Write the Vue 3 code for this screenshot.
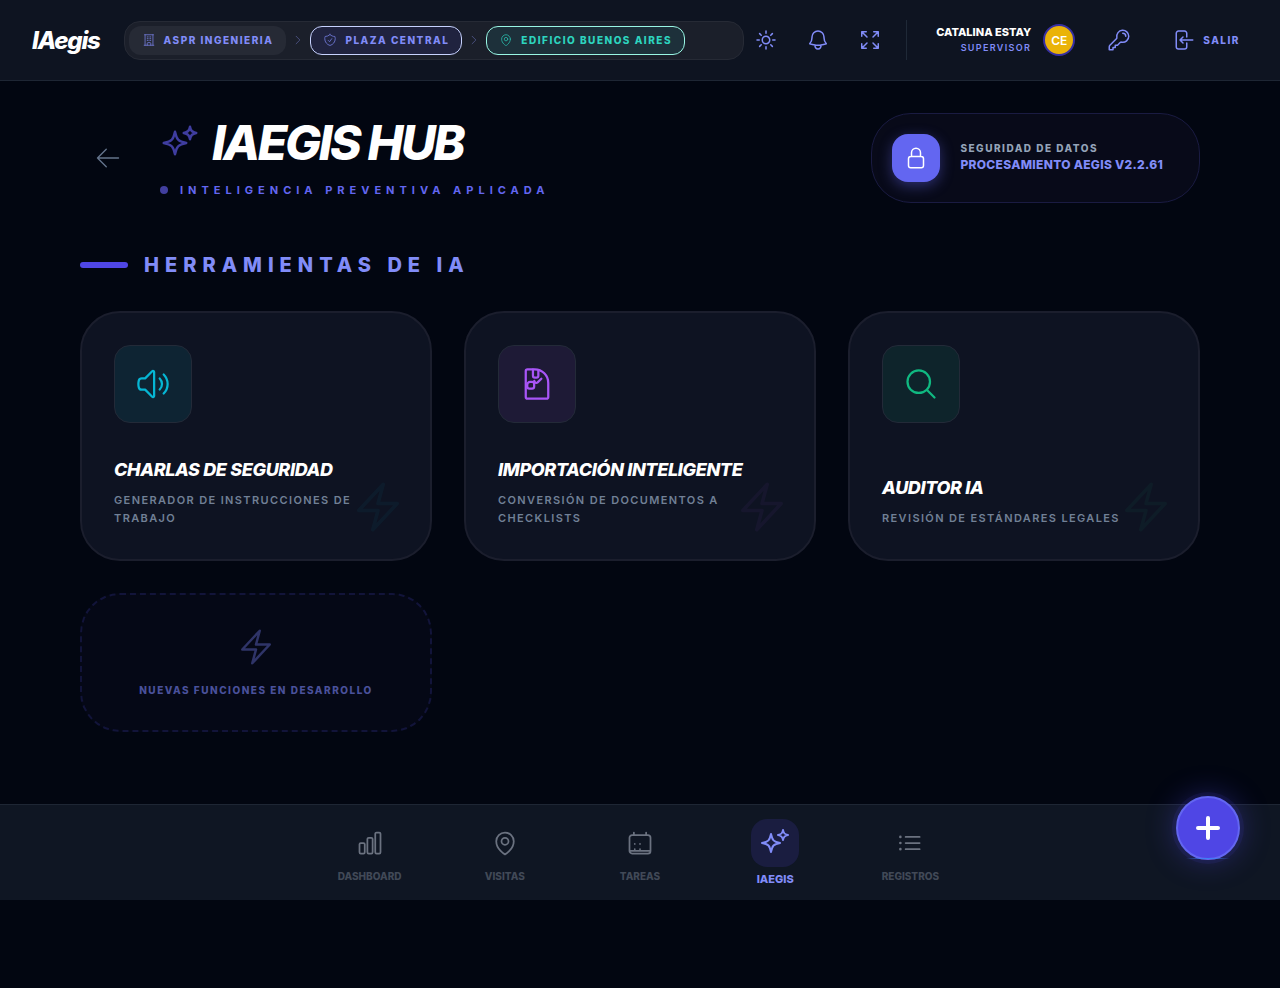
<script setup>
import { ref, h } from 'vue'

// Trazos de los iconos (viewBox 24x24)
const icons = {
  building: ['M3.75 21h16.5M4.5 3h15M5.25 3v18m13.5-18v18M9 6.75h1.5m-1.5 3h1.5m-1.5 3h1.5m3-6H15m-1.5 3H15m-1.5 3H15M9 21v-3.375c0-.621.504-1.125 1.125-1.125h3.75c.621 0 1.125.504 1.125 1.125V21'],
  shield: ['M9 12.75 11.25 15 15 9.75m-3-7.036A11.959 11.959 0 0 1 3.598 6 11.99 11.99 0 0 0 3 9.749c0 5.592 3.824 10.29 9 11.623 5.176-1.332 9-6.03 9-11.622 0-1.31-.21-2.571-.598-3.751h-.152c-3.196 0-6.1-1.248-8.25-3.285Z'],
  pin: ['M15 10.5a3 3 0 1 1-6 0 3 3 0 0 1 6 0Z', 'M19.5 10.5c0 7.142-7.5 11.25-7.5 11.25S4.5 17.642 4.5 10.5a7.5 7.5 0 1 1 15 0Z'],
  chevron: ['m8.25 4.5 7.5 7.5-7.5 7.5'],
  sun: ['M12 3v2.25m6.364.386-1.591 1.591M21 12h-2.25m-.386 6.364-1.591-1.591M12 18.75V21m-4.773-4.227-1.591 1.591M5.25 12H3m4.227-4.773L5.636 5.636M15.75 12a3.75 3.75 0 1 1-7.5 0 3.75 3.75 0 0 1 7.5 0Z'],
  bell: ['M14.857 17.082a23.848 23.848 0 0 0 5.454-1.31A8.967 8.967 0 0 1 18 9.75V9A6 6 0 0 0 6 9v.75a8.967 8.967 0 0 1-2.312 6.022c1.733.64 3.56 1.085 5.455 1.31m5.714 0a24.255 24.255 0 0 1-5.714 0m5.714 0a3 3 0 1 1-5.714 0'],
  expand: ['M3.75 3.75v4.5m0-4.5h4.5m-4.5 0L9 9M3.75 20.25v-4.5m0 4.5h4.5m-4.5 0L9 15M20.25 3.75h-4.5m4.5 0v4.5m0-4.5L15 9m5.25 11.25h-4.5m4.5 0v-4.5m0 4.5L15 15'],
  key: ['M15.75 5.25a3 3 0 0 1 3 3m3 0a6 6 0 0 1-7.029 5.912c-.563-.097-1.159.026-1.563.43L10.5 17.25H8.25v2.25H6v2.25H2.25v-2.818c0-.597.237-1.17.659-1.591l6.499-6.499c.404-.404.527-1 .43-1.563A6 6 0 1 1 21.75 8.25Z'],
  logout: ['M15.75 9V5.25A2.25 2.25 0 0 0 13.5 3h-6a2.25 2.25 0 0 0-2.25 2.25v13.5A2.25 2.25 0 0 0 7.5 21h6a2.25 2.25 0 0 0 2.25-2.25V15M12 9l-3 3m0 0 3 3m-3-3h12.75'],
  arrowLeft: ['M10.5 19.5 3 12m0 0 7.5-7.5M3 12h18'],
  sparkles: [
    'M9.813 15.904 9 18.75l-.813-2.846a4.5 4.5 0 0 0-3.09-3.09L2.25 12l2.846-.813a4.5 4.5 0 0 0 3.09-3.09L9 5.25l.813 2.846a4.5 4.5 0 0 0 3.09 3.09L15.75 12l-2.846.813a4.5 4.5 0 0 0-3.09 3.09Z',
    'M18.259 8.715 18 9.75l-.259-1.035a3.375 3.375 0 0 0-2.455-2.456L14.25 6l1.036-.259a3.375 3.375 0 0 0 2.455-2.456L18 2.25l.259 1.035a3.375 3.375 0 0 0 2.456 2.456L21.75 6l-1.035.259a3.375 3.375 0 0 0-2.456 2.456Z'
  ],
  lock: ['M16.5 10.5V6.75a4.5 4.5 0 1 0-9 0v3.75m-.75 11.25h10.5a2.25 2.25 0 0 0 2.25-2.25v-6.75a2.25 2.25 0 0 0-2.25-2.25H6.75a2.25 2.25 0 0 0-2.25 2.25v6.75a2.25 2.25 0 0 0 2.25 2.25Z'],
  speaker: ['M19.114 5.636a9 9 0 0 1 0 12.728M16.463 8.288a5.25 5.25 0 0 1 0 7.424M6.75 8.25l4.72-4.72a.75.75 0 0 1 1.28.53v15.88a.75.75 0 0 1-1.28.53l-4.72-4.72H4.51c-.88 0-1.704-.507-1.938-1.354A9.009 9.009 0 0 1 2.25 12c0-.83.112-1.633.322-2.396C2.806 8.756 3.63 8.25 4.51 8.25H6.75Z'],
  document: [
    'M10.5 2.25H5.625c-.621 0-1.125.504-1.125 1.125v17.25c0 .621.504 1.125 1.125 1.125h12.75c.621 0 1.125-.504 1.125-1.125V11.25a9 9 0 0 0-9-9Z',
    'M9.3 2.4v4.1c0 .7.5 1.2 1.2 1.2h1.2c.7 0 1.2-.5 1.2-1.2V2.8',
    'M7.4 10.6h1.3c.8 0 1.4.6 1.4 1.4v1.6c0 .8-.6 1.4-1.4 1.4H6.9c-.8 0-1.4-.6-1.4-1.4v-1.1c0-1 .9-1.900 1.900-1.900Z',
    'M10.200 9.900c.2 1.200 1.400 1.700 2.200 1l2.500-2.400'
  ],
  search: ['m21 21-5.197-5.197m0 0A7.5 7.5 0 1 0 5.196 5.196a7.5 7.5 0 0 0 10.607 10.607Z'],
  bolt: ['m3.75 13.5 10.5-11.25L12 10.5h8.25L9.75 21.75 12 13.5H3.75Z'],
  chart: [
    'M3 13.125C3 12.504 3.504 12 4.125 12h2.25c.621 0 1.125.504 1.125 1.125v6.75C7.5 20.496 6.996 21 6.375 21h-2.25A1.125 1.125 0 0 1 3 19.875v-6.75Z',
    'M9.75 8.625c0-.621.504-1.125 1.125-1.125h2.25c.621 0 1.125.504 1.125 1.125v11.25c0 .621-.504 1.125-1.125 1.125h-2.25a1.125 1.125 0 0 1-1.125-1.125V8.625Z',
    'M16.5 4.125c0-.621.504-1.125 1.125-1.125h2.25C20.496 3 21 3.504 21 4.125v15.75c0 .621-.504 1.125-1.125 1.125h-2.25a1.125 1.125 0 0 1-1.125-1.125V4.125Z'
  ],
  calendar: [
    'M6.75 3v2.25M17.25 3v2.25M3 18.75V7.5a2.25 2.25 0 0 1 2.25-2.25h13.5A2.25 2.25 0 0 1 21 7.5v11.25m-18 0A2.25 2.25 0 0 0 5.25 21h13.5A2.25 2.25 0 0 0 21 18.75m-18 0h18',
    'M7.5 12.75h.008v.008H7.5v-.008ZM12 12.75h.008v.008H12v-.008ZM7.5 17.25h.008v.008H7.5v-.008ZM12 17.25h.008v.008H12v-.008Z'
  ],
  list: ['M8.25 6.75h12M8.25 12h12m-12 5.25h12M3.75 6.75h.007v.008H3.75V6.75Zm.375 0a.375.375 0 1 1-.75 0 .375.375 0 0 1 .75 0ZM3.75 12h.007v.008H3.75V12Zm.375 0a.375.375 0 1 1-.75 0 .375.375 0 0 1 .75 0Zm-.375 5.25h.007v.008H3.75v-.008Zm.375 0a.375.375 0 1 1-.75 0 .375.375 0 0 1 .75 0Z'],
  plus: ['M12 4.5v15m7.5-7.5h-15']
}

const Icon = (props) =>
  h(
    'svg',
    {
      viewBox: '0 0 24 24',
      width: props.size,
      height: props.size,
      fill: 'none',
      stroke: 'currentColor',
      'stroke-width': props.stroke || 1.5,
      'stroke-linecap': 'round',
      'stroke-linejoin': 'round',
      'aria-hidden': 'true'
    },
    icons[props.name].map((d) => h('path', { d }))
  )
Icon.props = ['name', 'size', 'stroke']

const crumbs = [
  { label: 'ASPR Ingenieria', icon: 'building', kind: 'company' },
  { label: 'Plaza Central', icon: 'shield', kind: 'project' },
  { label: 'Edificio Buenos Aires', icon: 'pin', kind: 'site' }
]

const tools = [
  { title: 'Charlas de Seguridad', desc: 'Generador de instrucciones de trabajo', icon: 'speaker', tone: 'cyan' },
  { title: 'Importación Inteligente', desc: 'Conversión de documentos a checklists', icon: 'document', tone: 'purple' },
  { title: 'Auditor IA', desc: 'Revisión de estándares legales', icon: 'search', tone: 'green' }
]

const tabs = [
  { id: 'dashboard', label: 'Dashboard', icon: 'chart' },
  { id: 'visitas', label: 'Visitas', icon: 'pin' },
  { id: 'tareas', label: 'Tareas', icon: 'calendar' },
  { id: 'iaegis', label: 'IAegis', icon: 'sparkles' },
  { id: 'registros', label: 'Registros', icon: 'list' }
]

const activeTab = ref('iaegis')
</script>

<template>
  <div class="app">
    <!-- Barra superior -->
    <header class="topbar">
      <a href="#" class="brand">IAegis</a>

      <nav class="crumbs" aria-label="Contexto">
        <template v-for="(crumb, i) in crumbs" :key="crumb.label">
          <Icon v-if="i > 0" name="chevron" :size="12" class="crumb-sep" />
          <button type="button" class="crumb" :class="crumb.kind">
            <Icon :name="crumb.icon" :size="14" />
            <span>{{ crumb.label }}</span>
          </button>
        </template>
      </nav>

      <div class="actions">
        <button type="button" class="icon-btn" aria-label="Tema"><Icon name="sun" :size="24" /></button>
        <button type="button" class="icon-btn" aria-label="Notificaciones"><Icon name="bell" :size="24" /></button>
        <button type="button" class="icon-btn" aria-label="Pantalla completa"><Icon name="expand" :size="24" /></button>
      </div>

      <div class="user">
        <div class="user-text">
          <span class="user-name">Catalina Estay</span>
          <span class="user-role">Supervisor</span>
        </div>
        <span class="avatar">CE</span>
      </div>

      <div class="session">
        <button type="button" class="icon-btn" aria-label="Cambiar clave"><Icon name="key" :size="24" /></button>
        <button type="button" class="logout">
          <Icon name="logout" :size="24" />
          <span>Salir</span>
        </button>
      </div>
    </header>

    <main class="content">
      <!-- Cabecera -->
      <section class="hero">
        <button type="button" class="back" aria-label="Volver"><Icon name="arrowLeft" :size="28" :stroke="1.2" /></button>
        <div class="hero-text">
          <h1 class="hero-title">
            <Icon name="sparkles" :size="40" class="hero-icon" />
            <span>IAegis Hub</span>
          </h1>
          <p class="hero-sub">
            <span class="dot"></span>
            <span>Inteligencia Preventiva Aplicada</span>
          </p>
        </div>
        <div class="security">
          <span class="security-icon"><Icon name="lock" :size="24" /></span>
          <div class="security-text">
            <span class="security-label">Seguridad de Datos</span>
            <span class="security-value">Procesamiento Aegis v2.2.61</span>
          </div>
        </div>
      </section>

      <!-- Herramientas -->
      <h2 class="section-title"><span class="bar"></span>Herramientas de IA</h2>

      <div class="tools">
        <a v-for="tool in tools" :key="tool.title" href="#" class="tool" :class="tool.tone">
          <span class="tool-icon"><Icon :name="tool.icon" :size="36" /></span>
          <span class="tool-text">
            <span class="tool-title">{{ tool.title }}</span>
            <span class="tool-desc">{{ tool.desc }}</span>
          </span>
          <Icon name="bolt" :size="56" class="tool-bolt" />
        </a>

        <div class="soon">
          <Icon name="bolt" :size="40" class="soon-icon" />
          <span class="soon-text">Nuevas funciones en desarrollo</span>
        </div>
      </div>
    </main>

    <!-- Navegación inferior -->
    <footer class="bottombar">
      <nav class="tabs" aria-label="Principal">
        <button
          v-for="tab in tabs"
          :key="tab.id"
          type="button"
          class="tab"
          :class="{ active: activeTab === tab.id }"
          @click="activeTab = tab.id"
        >
          <span class="tab-icon"><Icon :name="tab.icon" :size="activeTab === tab.id ? 32 : 28" /></span>
          <span class="tab-label">{{ tab.label }}</span>
        </button>
      </nav>
      <button type="button" class="fab" aria-label="Nuevo"><Icon name="plus" :size="32" :stroke="3" /></button>
    </footer>
  </div>
</template>

<style>
body {
  margin: 0;
  background: #020611;
}
</style>

<style scoped>
.app {
  min-height: 100vh;
  box-sizing: border-box;
  padding-bottom: 88px;
  background: #020611;
  color: #fff;
  font-family: Inter, "Liberation Sans", sans-serif;
  text-transform: uppercase;
}

button {
  padding: 0;
  border: none;
  background: transparent;
  color: inherit;
  font: inherit;
  text-transform: inherit;
  cursor: pointer;
}

a {
  color: inherit;
  text-decoration: none;
}

svg {
  display: block;
  flex-shrink: 0;
}

/* Barra superior */
.topbar {
  display: flex;
  align-items: center;
  height: 80px;
  padding: 0 32px;
  background: #0e1421;
  border-bottom: 1px solid #1e2634;
}

.brand {
  margin-right: 24px;
  font-size: 24px;
  font-weight: 800;
  font-style: italic;
  letter-spacing: -0.05em;
  text-transform: none;
}

.crumbs {
  flex: 1;
  display: flex;
  align-items: center;
  gap: 6px;
  padding: 4px;
  border: 1px solid #262a35;
  border-radius: 16px;
  background: #1b1f2a;
}

.crumb {
  display: flex;
  align-items: center;
  gap: 8px;
  padding: 6px 12px;
  border: 1px solid transparent;
  border-radius: 12px;
  color: #818cf8;
  font-size: 10px;
  font-weight: 800;
  line-height: 15px;
  letter-spacing: 0.15em;
  white-space: nowrap;
}

.crumb svg {
  opacity: 0.8;
}

.crumb.company {
  background: #262a35;
}

.crumb.project {
  border-color: #c7d2fe;
  background: #20233f;
}

.crumb.site {
  border-color: #99f6e4;
  background: #1d303a;
  color: #2dd4bf;
}

.crumb-sep {
  color: #565c96;
}

.actions {
  display: flex;
  gap: 8px;
}

.icon-btn {
  padding: 10px;
  color: #818cf8;
}

.user {
  display: flex;
  align-items: center;
  gap: 12px;
  height: 40px;
  margin-left: 14px;
  padding-left: 29px;
  border-left: 1px solid #1f2937;
}

.user-text {
  display: flex;
  flex-direction: column;
  align-items: flex-end;
  white-space: nowrap;
}

.user-name {
  font-size: 11px;
  font-weight: 800;
  line-height: 16px;
}

.user-role {
  color: #818cf8;
  font-size: 9px;
  font-weight: 600;
  line-height: 16px;
  letter-spacing: 0.15em;
}

.avatar {
  display: flex;
  align-items: center;
  justify-content: center;
  box-sizing: border-box;
  width: 32px;
  height: 32px;
  border: 2px solid #3730a3;
  border-radius: 50%;
  background: #eab308;
  font-size: 12px;
  font-weight: 600;
}

.session {
  display: flex;
  align-items: center;
  gap: 22px;
  margin-left: 22px;
}

.logout {
  display: flex;
  align-items: center;
  gap: 8px;
  padding: 8px;
  color: #818cf8;
  font-size: 10px;
  font-weight: 800;
  letter-spacing: 0.15em;
}

/* Contenido */
.content {
  padding: 32px 80px 72px;
}

.hero {
  display: flex;
  align-items: center;
  gap: 24px;
  margin-bottom: 48px;
}

.back {
  display: flex;
  align-items: center;
  justify-content: center;
  width: 56px;
  height: 56px;
  border-radius: 50%;
  color: #64748b;
}

.hero-text {
  flex: 1;
}

.hero-title {
  display: flex;
  align-items: center;
  gap: 12px;
  margin: 0 0 14px;
  font-size: 48px;
  font-weight: 800;
  font-style: italic;
  line-height: 50px;
  letter-spacing: -0.05em;
}

.hero-icon {
  color: #3f3da0;
}

.hero-sub {
  display: flex;
  align-items: center;
  gap: 12px;
  margin: 0;
  color: #6366f1;
  font-size: 11px;
  font-weight: 700;
  line-height: 16px;
  letter-spacing: 5px;
}

.dot {
  width: 8px;
  height: 8px;
  border-radius: 50%;
  background: #423f9f;
}

.security {
  display: flex;
  align-items: center;
  gap: 20px;
  padding: 20px 36px 20px 20px;
  border: 1px solid #1a1b42;
  border-radius: 40px;
  background: #080a19;
}

.security-icon {
  display: flex;
  align-items: center;
  justify-content: center;
  width: 48px;
  height: 48px;
  border-radius: 16px;
  background: #6366f1;
  box-shadow: 0 4px 14px rgba(99, 102, 241, 0.4);
}

.security-text {
  display: flex;
  flex-direction: column;
  padding-bottom: 2px;
}

.security-label {
  color: #94a3b8;
  font-size: 10px;
  font-weight: 800;
  line-height: 15px;
  letter-spacing: 0.15em;
}

.security-value {
  color: #818cf8;
  font-size: 12px;
  font-weight: 800;
  line-height: 17px;
  letter-spacing: 0.025em;
}

.section-title {
  display: flex;
  align-items: center;
  gap: 16px;
  margin: 0 0 32px;
  color: #818cf8;
  font-size: 20px;
  font-weight: 800;
  line-height: 28px;
  letter-spacing: 0.3em;
}

.bar {
  width: 48px;
  height: 6px;
  border-radius: 3px;
  background: #4f46e5;
}

.tools {
  display: grid;
  grid-template-columns: repeat(3, 1fr);
  gap: 32px;
}

.tool {
  position: relative;
  display: flex;
  flex-direction: column;
  justify-content: space-between;
  align-items: flex-start;
  gap: 32px;
  padding: 32px;
  border: 2px solid #1b1e2d;
  border-radius: 40px;
  background: #0e1322;
}

.tool-icon {
  padding: 20px;
  border: 1px solid #232a38;
  border-radius: 16px;
}

.cyan .tool-icon {
  background: #0e2433;
  color: #06b6d4;
}

.purple .tool-icon {
  background: #1e1a36;
  color: #a855f7;
}

.green .tool-icon {
  background: #0e242b;
  color: #10b981;
}

.tool-text {
  display: flex;
  flex-direction: column;
  gap: 6px;
}

.tool-title {
  font-size: 18px;
  font-weight: 800;
  font-style: italic;
  line-height: 30px;
  letter-spacing: -0.02em;
}

.tool-desc {
  color: #718096;
  font-size: 11px;
  font-weight: 600;
  line-height: 18px;
  letter-spacing: 0.125em;
}

.tool-bolt {
  position: absolute;
  right: 24px;
  bottom: 24px;
  opacity: 0.05;
}

.cyan .tool-bolt {
  color: #06b6d4;
}

.purple .tool-bolt {
  color: #a855f7;
}

.green .tool-bolt {
  color: #10b981;
}

.soon {
  display: flex;
  flex-direction: column;
  align-items: center;
  gap: 16px;
  padding: 32px;
  border: 2px dashed #12143a;
  border-radius: 40px;
  background: #050816;
}

.soon-icon {
  color: #2f3468;
}

.soon-text {
  color: #4a519b;
  font-size: 10px;
  font-weight: 800;
  line-height: 15px;
  letter-spacing: 0.15em;
}

/* Navegación inferior */
.bottombar {
  position: relative;
  height: 95px;
  border-top: 1px solid #1e2634;
  background: #0f1623;
}

.tabs {
  display: grid;
  grid-template-columns: repeat(5, 1fr);
  align-items: center;
  max-width: 676px;
  height: 100%;
  margin: 0 auto;
}

.tab {
  display: flex;
  flex-direction: column;
  align-items: center;
  gap: 4px;
}

.tab-icon {
  padding: 8px;
  border-radius: 16px;
  color: #6b7280;
}

.tab-label {
  color: #414957;
  font-size: 10px;
  font-weight: 800;
  line-height: 15px;
}

.tab.active .tab-icon {
  background: #1a1d40;
  color: #818cf8;
}

.tab.active .tab-label {
  color: #818cf8;
  font-size: 11px;
  line-height: 16px;
}

.fab {
  position: absolute;
  top: -9px;
  right: 40px;
  display: flex;
  align-items: center;
  justify-content: center;
  box-sizing: border-box;
  width: 64px;
  height: 64px;
  border: 2px solid #6366f1;
  border-radius: 50%;
  background: #4f46e5;
  box-shadow: 0 0 0 4px rgba(79, 70, 229, 0.1), 0 0 30px rgba(79, 70, 229, 0.4);
}

/* Brillo en el borde inferior del botón */
.fab::after {
  content: "";
  position: absolute;
  left: 8px;
  right: 8px;
  bottom: -1px;
  height: 1px;
  background: linear-gradient(90deg, transparent, #3b82f6, transparent);
}
</style>
